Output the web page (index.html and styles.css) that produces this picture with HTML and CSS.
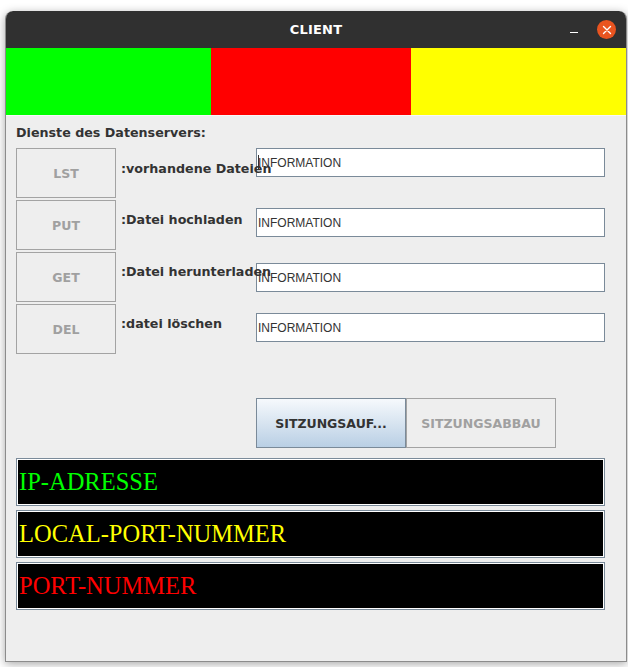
FILE: index.html
```html
<!DOCTYPE html>
<html>
<head>
<meta charset="utf-8">
<link rel="stylesheet" href="styles.css">
</head>
<body>
<div class="window">
  <div class="titlebar">
    <span class="title">CLIENT</span>
    <span class="min"></span>
    <span class="close">
      <svg width="10" height="10" viewBox="0 0 10 10"><path d="M1.5 1.5 L8.5 8.5 M8.5 1.5 L1.5 8.5" stroke="#fff" stroke-width="1.4" stroke-linecap="round"/></svg>
    </span>
  </div>
  <div class="colors">
    <div class="c green"></div>
    <div class="c red"></div>
    <div class="c yellow"></div>
  </div>
  <div class="panel">
    <div class="heading">Dienste des Datenservers:</div>
    <div class="rows">
      <div class="row r1">
        <div class="btn">LST</div>
        <div class="label">:vorhandene Dateien</div>
        <div class="field"><span class="caret"></span>INFORMATION</div>
      </div>
      <div class="row r2">
        <div class="btn">PUT</div>
        <div class="label">:Datei hochladen</div>
        <div class="field">INFORMATION</div>
      </div>
      <div class="row r3">
        <div class="btn">GET</div>
        <div class="label">:Datei herunterladen</div>
        <div class="field">INFORMATION</div>
      </div>
      <div class="row r4">
        <div class="btn">DEL</div>
        <div class="label">:datei löschen</div>
        <div class="field">INFORMATION</div>
      </div>
    </div>
    <div class="session">
      <div class="sbtn active">SITZUNGSAUF...</div>
      <div class="sbtn">SITZUNGSABBAU</div>
    </div>
    <div class="boxes">
      <div class="box ip">IP-ADRESSE</div>
      <div class="box lp">LOCAL-PORT-NUMMER</div>
      <div class="box pn">PORT-NUMMER</div>
    </div>
  </div>
</div>
</body>
</html>
```

FILE: styles.css
```css
html, body {
  margin: 0;
  padding: 0;
  background: #ffffff;
}
body {
  padding: 11px 0 0 5px;
  width: 628px;
  height: 667px;
  box-sizing: border-box;
  overflow: hidden;
}
.window {
  width: 622px;
  height: 651px;
  box-sizing: border-box;
  border: 1px solid #8c8c8c;
  border-top: none;
  border-radius: 8px 8px 0 0;
  background: #eeeeee;
  box-shadow: 0 2px 10px rgba(0,0,0,0.35);
  display: flex;
  flex-direction: column;
  overflow: hidden;
}
.titlebar {
  height: 37px;
  flex: none;
  background: #303030;
  border-radius: 8px 8px 0 0;
  position: relative;
  display: flex;
  align-items: center;
  justify-content: center;
  margin: 0 -1px;
}
.title {
  color: #ffffff;
  font-family: "DejaVu Sans", sans-serif;
  font-weight: bold;
  font-size: 13px;
  letter-spacing: 0.2px;
}
.min {
  position: absolute;
  left: 565px;
  top: 21px;
  width: 8px;
  height: 1px;
  background: #ffffff;
}
.close {
  position: absolute;
  left: 592px;
  top: 9px;
  width: 19px;
  height: 19px;
  border-radius: 50%;
  background: #e95420;
  display: flex;
  align-items: center;
  justify-content: center;
}
.close svg { display: block; }
.colors {
  height: 67px;
  flex: none;
  display: flex;
  border-bottom: 1px solid #f8f8f8;
}
.c { height: 100%; }
.green { width: 205px; background: #00ff00; }
.red { width: 200px; background: #ff0000; }
.yellow { flex: 1; background: #ffff00; }
.panel {
  flex: 1;
  padding: 9px 0 0 10px;
  font-family: "DejaVu Sans", sans-serif;
}
.heading {
  font-size: 12.7px;
  font-weight: bold;
  color: #333333;
  line-height: 16px;
  margin-bottom: 7px;
}
.rows {
  display: flex;
  flex-direction: column;
  gap: 2px;
}
.row {
  display: flex;
  height: 50px;
  align-items: flex-start;
}
.btn {
  width: 100px;
  height: 50px;
  box-sizing: border-box;
  border: 1px solid #a3a3a3;
  color: #a0a0a0;
  font-size: 12.5px;
  font-weight: bold;
  display: flex;
  align-items: center;
  justify-content: center;
  padding-top: 1px;
  flex: none;
}
.label {
  width: 135px;
  margin-left: 5px;
  margin-top: 12px;
  line-height: 16px;
  font-size: 12.7px;
  font-weight: bold;
  color: #333333;
  white-space: nowrap;
  position: relative;
  z-index: 2;
  flex: none;
}
.r1 .label { margin-top: 13px; }
.field {
  width: 349px;
  height: 29px;
  box-sizing: border-box;
  border: 1px solid #7a8a99;
  background: #ffffff;
  font-family: "Liberation Sans", sans-serif;
  font-size: 12px;
  color: #333333;
  display: flex;
  align-items: center;
  padding-left: 1px;
  position: relative;
  flex: none;
}
.caret {
  position: absolute;
  left: 1px;
  top: 6px;
  width: 1px;
  height: 15px;
  background: #333333;
}
.r2 .field { margin-top: 8px; }
.r3 .field { margin-top: 11px; }
.r4 .field { margin-top: 9px; }
.session {
  display: flex;
  margin: 44px 0 0 240px;
}
.sbtn {
  width: 150px;
  height: 50px;
  box-sizing: border-box;
  border: 1px solid #a3a3a3;
  font-size: 12.5px;
  font-weight: bold;
  color: #a0a0a0;
  display: flex;
  align-items: center;
  justify-content: center;
}
.sbtn.active {
  border-color: #7a8a99;
  color: #333333;
  background: linear-gradient(to bottom, #f6f9fc, #b9cfe4);
}
.boxes {
  display: flex;
  flex-direction: column;
  gap: 4px;
  margin-top: 10px;
  width: 589px;
}
.box {
  height: 48px;
  box-sizing: border-box;
  border: 1px solid #7a8a99;
  box-shadow: inset 0 0 0 1px #ffffff;
  background: #000000;
  font-family: "Liberation Serif", serif;
  font-size: 24.5px;
  display: flex;
  align-items: center;
  padding-left: 2px;
}
.ip { color: #00ff00; }
.lp { color: #ffff00; }
.pn { color: #ff0000; }
```
